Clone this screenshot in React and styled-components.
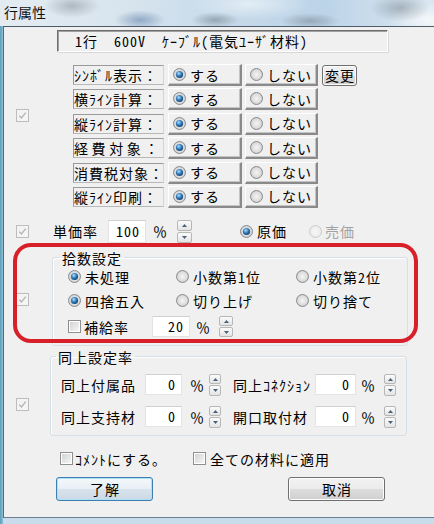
import React, { useId } from "react";
import styled, { createGlobalStyle } from "styled-components";

const FONT = `"Noto Sans Mono CJK JP", "Noto Sans CJK JP", monospace`;

const Global = createGlobalStyle`
  html, body { margin: 0; padding: 0; }
  body {
    width: 434px; height: 524px; overflow: hidden;
    font-family: ${FONT}; font-size: 14px; letter-spacing: 1px; color: #000;
  }
  #root { width: 434px; height: 524px; }
`;

const Window = styled.div`
  width: 434px; height: 524px;
  display: flex; flex-direction: column; overflow: hidden;
`;

const TitleBar = styled.div`
  height: 26px; flex: none; box-sizing: border-box;
  display: flex; align-items: center; padding: 0 0 2px 4px;
  background:
    radial-gradient(ellipse 28px 12px at 72px 6px, rgba(120,128,136,0.45), transparent),
    radial-gradient(ellipse 26px 10px at 140px 20px, rgba(60,100,150,0.45), transparent),
    radial-gradient(ellipse 24px 8px at 215px 20px, rgba(90,100,110,0.45), transparent),
    radial-gradient(ellipse 30px 8px at 310px 21px, rgba(90,100,110,0.4), transparent),
    radial-gradient(ellipse 30px 14px at 400px 8px, rgba(80,90,100,0.35), transparent),
    radial-gradient(ellipse 40px 18px at 428px 20px, rgba(255,255,255,0.7), transparent),
    radial-gradient(ellipse 60px 16px at 250px 4px, rgba(240,246,250,0.7), transparent),
    linear-gradient(90deg, #e4ecf2 0, #d7e4ee 30%, #c4d8e9 55%, #bcd4e8 75%, #dbe7f0 100%);
`;

const Title = styled.span`
  font-size: 14px; line-height: 16px; color: #111; letter-spacing: 0;
`;

const Frame = styled.div`
  flex: 1; display: flex; padding: 0 0 6px 3px;
  background:
    linear-gradient(90deg, #5e9cb6 0, #8cc0d8 3px, transparent 3px),
    linear-gradient(180deg, #bcd4e8 0, #c9dcec 100%);
`;

const Client = styled.div`
  flex: 1; display: flex; flex-direction: column;
  background: #f0f0f0;
  border-top: 1px solid #4d5b68;
  border-left: 1px solid #56687a;
  border-bottom: 1px solid #6c7e90;
`;

const PathBox = styled.div`
  margin: 3px 0 0 53px; width: 331px; height: 22px; box-sizing: border-box;
  border: 1px solid; border-color: #6d6d6d #ffffff #ffffff #6d6d6d;
  box-shadow: inset 1px 1px 0 #a0a0a0, 1px 1px 0 #d8d8d8;
  padding-left: 17px; line-height: 20px; white-space: pre;
`;

const Section = styled.div`
  display: flex; align-items: ${p => p.$align || "flex-start"};
  margin-top: ${p => p.$top || 0}px;
  height: ${p => (p.$h ? `${p.$h}px` : "auto")};
`;

const SideBox = styled.div`
  margin-left: ${p => p.$left ?? 12}px;
  margin-top: ${p => p.$top || 0}px;
  margin-right: ${p => p.$gap || 0}px;
  display: flex; flex: none;
`;

const IconSvg = styled.svg`
  display: block; flex: none;
`;

function Check({ checked, disabled }) {
  const id = useId().replace(/:/g, "");
  return (
    <IconSvg width="13" height="13" viewBox="0 0 13 13">
      <defs>
        <linearGradient id={`c${id}`} x1="0" y1="0" x2="1" y2="1">
          <stop offset="0" stopColor={disabled ? "#f2f2f2" : "#d2d3d4"} />
          <stop offset="1" stopColor="#f6f6f6" />
        </linearGradient>
      </defs>
      <rect x="0.5" y="0.5" width="12" height="12" fill={disabled ? "#f4f4f4" : "#fff"} stroke={disabled ? "#bdbdbd" : "#8e8f8f"} />
      <rect x="2" y="2" width="9" height="9" fill={`url(#c${id})`} />
      {checked && (
        <path d="M3.2 6.6 L5.4 9 L9.8 3.6" stroke={disabled ? "#b3b3b3" : "#333"} strokeWidth="1.3" fill="none" />
      )}
    </IconSvg>
  );
}

function Radio({ checked, disabled }) {
  const id = useId().replace(/:/g, "");
  return (
    <IconSvg width="13" height="13" viewBox="0 0 13 13">
      <defs>
        <radialGradient id={`r${id}`} cx="50%" cy="50%" r="50%">
          <stop offset="0" stopColor={disabled ? "#f8f8f8" : "#f4f4f4"} />
          <stop offset="0.7" stopColor={disabled ? "#eeeeee" : "#dedede"} />
          <stop offset="1" stopColor={disabled ? "#e6e6e6" : "#c8c8c8"} />
        </radialGradient>
        <radialGradient id={`d${id}`} cx="40%" cy="35%" r="70%">
          <stop offset="0" stopColor="#b6e2fb" />
          <stop offset="0.45" stopColor="#3a86c6" />
          <stop offset="1" stopColor="#0e3a68" />
        </radialGradient>
      </defs>
      <circle cx="6.5" cy="6.5" r="6" fill={`url(#r${id})`} stroke={disabled ? "#cdcdcd" : "#8b8e91"} />
      {checked && <circle cx="6.5" cy="6.5" r="3.6" fill={`url(#d${id})`} />}
    </IconSvg>
  );
}

/* option rows */
const OptionList = styled.div`
  display: flex; flex-direction: column; gap: 2.4px;
`;

const OptionRow = styled.div`
  display: flex; align-items: center; height: 22px;
`;

const StaticLabel = styled.div`
  width: 91px; height: 20px; box-sizing: border-box;
  border: 1px solid; border-color: #9a9a9a #d4d4d4 #b8b8b8 #9a9a9a;
  line-height: 18px; white-space: pre;
  letter-spacing: ${p => p.$ls || 1}px;
`;

const RaisedButton = styled.div`
  width: ${p => p.$w}px; height: 22px; box-sizing: border-box;
  margin-left: ${p => p.$ml}px;
  display: flex; align-items: center; gap: 4px; padding-left: 4px;
  background: #f0f0f0;
  border-top: 1px solid #fff; border-left: 1px solid #fff;
  border-right: 2px solid #8a8a8a; border-bottom: 2px solid #8a8a8a;
  box-shadow: inset -1px -1px 0 #c4c4c4;
  line-height: 18px;
`;

const SmallButton = styled.div`
  width: 35px; height: 21px; box-sizing: border-box; margin-left: 4px;
  border: 1px solid #707070; border-radius: 3px;
  background: linear-gradient(#f2f2f2 0, #ebebeb 50%, #dddddd 50%, #cfcfcf 100%);
  box-shadow: inset 0 0 0 1px #fcfcfc;
  display: flex; align-items: center; justify-content: center;
  line-height: 18px; padding-left: 1px;
`;

/* inline controls */
const Text = styled.span`
  line-height: 18px; white-space: pre; flex: none;
  margin-left: ${p => p.$ml || 0}px;
  color: ${p => (p.$disabled ? "#a3a3a3" : "#000")};
`;

const NumBox = styled.div`
  width: ${p => p.$w}px; height: ${p => p.$h || 22}px; box-sizing: border-box;
  margin-left: ${p => p.$ml || 0}px; flex: none;
  background: #fff; border: 1px solid #e4e4e4; border-top-color: #d0d0d0;
  text-align: right; padding-right: 5px;
  line-height: ${p => (p.$h || 22) - 2}px;
`;

const Spin = styled.div`
  width: ${p => p.$w}px; height: ${p => p.$h}px; margin-left: ${p => p.$ml || 0}px;
  display: flex; flex-direction: column; gap: 1px; flex: none;
`;

const SpinHalf = styled.div`
  flex: 1; box-sizing: border-box;
  border: 1px solid #b7b7b7; border-radius: 2px;
  background: linear-gradient(#fbfbfb, #e4e4e4);
  display: flex; align-items: center; justify-content: center;
`;

function Spinner({ w, h, ml }) {
  return (
    <Spin $w={w} $h={h} $ml={ml}>
      <SpinHalf>
        <IconSvg width="5" height="3" viewBox="0 0 5 3"><path d="M0 3 L2.5 0 L5 3 Z" fill="#4c607a" /></IconSvg>
      </SpinHalf>
      <SpinHalf>
        <IconSvg width="5" height="3" viewBox="0 0 5 3"><path d="M0 0 L2.5 3 L5 0 Z" fill="#4c607a" /></IconSvg>
      </SpinHalf>
    </Spin>
  );
}

const Choice = styled.div`
  display: flex; align-items: center; gap: ${p => p.$gap ?? 4}px; flex: none;
  margin-left: ${p => p.$ml || 0}px;
`;

/* group boxes */
const Highlight = styled.div`
  position: relative;
  margin-left: 9px; width: 405px; height: 100px; box-sizing: border-box;
  padding: 8px 0 0 3px;
  display: flex; align-items: flex-start;
  &::after {
    content: ""; position: absolute; inset: 0;
    border: 4px solid #d8202b; border-radius: 18px;
    pointer-events: none;
  }
`;

const Group = styled.fieldset`
  margin: 0; padding: 0; min-width: 0;
  width: ${p => p.$w}px; height: ${p => p.$h}px; box-sizing: border-box;
  border: 1px solid #d5dfe5; border-radius: 3px;
  box-shadow: inset 1px 1px 0 #fff;
`;

const Legend = styled.legend`
  margin-left: ${p => p.$ml}px; padding: 0 2px;
  line-height: 14px;
`;

const RoundGrid = styled.div`
  display: grid; grid-template-columns: 108px 120px auto;
  grid-auto-rows: 24px; padding-left: 15px; align-items: center;
`;

const SupplyRow = styled.div`
  display: flex; align-items: center; height: 22px;
  padding-left: 15px; margin-top: 3px;
`;

const RateBody = styled.div`
  display: flex; flex-direction: column; gap: 10px;
  padding: 10px 0 0 10px;
`;

const RateRow = styled.div`
  display: flex; align-items: center; height: 22px;
`;

const RateLabel = styled.span`
  width: ${p => p.$w}px; flex: none; margin-left: ${p => p.$ml || 0}px;
  line-height: 18px; white-space: pre;
`;

const FooterChecks = styled.div`
  display: flex; align-items: center; margin: 16px 0 0 56px; height: 14px;
`;

const Buttons = styled.div`
  display: flex; margin: 11px 0 0 52px; gap: 135px;
`;

const PushButton = styled.div`
  width: 97px; height: 24px; box-sizing: border-box;
  border: 1px solid ${p => (p.$default ? "#3c7fb1" : "#707070")};
  border-radius: 3px;
  background: ${p =>
    p.$default
      ? "linear-gradient(#f4f8fb 0, #e8eff5 50%, #d8e3ec 50%, #cbd9e5 100%)"
      : "linear-gradient(#f2f2f2 0, #ebebeb 50%, #dddddd 50%, #cfcfcf 100%)"};
  box-shadow: inset 0 0 0 1px ${p => (p.$default ? "#aee0f8" : "#fcfcfc")};
  display: flex; align-items: center; justify-content: center;
  line-height: 18px; padding-left: 1px;
`;

const options = [
  { label: "ｼﾝﾎﾞﾙ表示：", change: true },
  { label: "横ﾗｲﾝ計算：" },
  { label: "縦ﾗｲﾝ計算：" },
  { label: "経費対象：", ls: 3.6 },
  { label: "消費税対象：" },
  { label: "縦ﾗｲﾝ印刷：" },
];

function RateField({ label, lw, ml, iw, pm, sm }) {
  return (
    <>
      <RateLabel $w={lw} $ml={ml}>{label}</RateLabel>
      <NumBox $w={iw} $h={21}>0</NumBox>
      <Text $ml={pm}>％</Text>
      <Spinner w={12} h={22} ml={sm} />
    </>
  );
}

export default function App() {
  return (
    <>
      <Global />
      <Window>
        <TitleBar>
          <Title>行属性</Title>
        </TitleBar>
        <Frame>
          <Client>
            <PathBox>1行  600V  ｹｰﾌﾞﾙ(電気ﾕｰｻﾞ材料)</PathBox>

            <Section $top={12}>
              <SideBox $top={45} $gap={44}><Check checked disabled /></SideBox>
              <OptionList>
                {options.map(o => (
                  <OptionRow key={o.label}>
                    <StaticLabel $ls={o.ls}>{o.label}</StaticLabel>
                    <RaisedButton $w={74} $ml={4}>
                      <Radio checked />
                      <span>する</span>
                    </RaisedButton>
                    <RaisedButton $w={73} $ml={3}>
                      <Radio />
                      <span>しない</span>
                    </RaisedButton>
                    {o.change && <SmallButton>変更</SmallButton>}
                  </OptionRow>
                ))}
              </OptionList>
            </Section>

            <Section $top={12} $h={23} $align="center">
              <SideBox $gap={24}><Check checked disabled /></SideBox>
              <Text>単価率</Text>
              <NumBox $w={38} $h={23} $ml={10}>100</NumBox>
              <Text $ml={7}>％</Text>
              <Spinner w={15} h={23} ml={9} />
              <Choice $ml={48}><Radio checked /><Text>原価</Text></Choice>
              <Choice $ml={22} $gap={3}><Radio disabled /><Text $disabled>売価</Text></Choice>
            </Section>

            <Highlight>
              <SideBox $left={0} $top={42} $gap={23}><Check checked disabled /></SideBox>
              <Group $w={356} $h={95}>
                <Legend $ml={7}>拾数設定</Legend>
                <RoundGrid>
                  <Choice><Radio checked /><Text>未処理</Text></Choice>
                  <Choice><Radio /><Text>小数第1位</Text></Choice>
                  <Choice><Radio /><Text>小数第2位</Text></Choice>
                  <Choice><Radio checked /><Text>四捨五入</Text></Choice>
                  <Choice><Radio /><Text>切り上げ</Text></Choice>
                  <Choice><Radio /><Text>切り捨て</Text></Choice>
                </RoundGrid>
                <SupplyRow>
                  <Choice $gap={3}><Check /><Text>補給率</Text></Choice>
                  <NumBox $w={38} $h={21} $ml={23}>20</NumBox>
                  <Text $ml={6}>％</Text>
                  <Spinner w={14} h={21} ml={8} />
                </SupplyRow>
              </Group>
            </Highlight>

            <Section $top={7}>
              <SideBox $top={48} $gap={21}><Check checked disabled /></SideBox>
              <Group $w={357} $h={86}>
                <Legend $ml={5}>同上設定率</Legend>
                <RateBody>
                  <RateRow>
                    <RateField label="同上付属品" lw={84} iw={37} pm={8} sm={4} />
                    <RateField label="同上ｺﾈｸｼｮﾝ" lw={82} ml={12} iw={41} pm={5} sm={8} />
                  </RateRow>
                  <RateRow>
                    <RateField label="同上支持材" lw={84} iw={37} pm={8} sm={4} />
                    <RateField label="開口取付材" lw={82} ml={12} iw={41} pm={5} sm={8} />
                  </RateRow>
                </RateBody>
              </Group>
            </Section>

            <FooterChecks>
              <Choice $gap={2}><Check /><Text>ｺﾒﾝﾄにする。</Text></Choice>
              <Choice $gap={4} $ml={26}><Check /><Text>全ての材料に適用</Text></Choice>
            </FooterChecks>

            <Buttons>
              <PushButton $default>了解</PushButton>
              <PushButton>取消</PushButton>
            </Buttons>
          </Client>
        </Frame>
      </Window>
    </>
  );
}
